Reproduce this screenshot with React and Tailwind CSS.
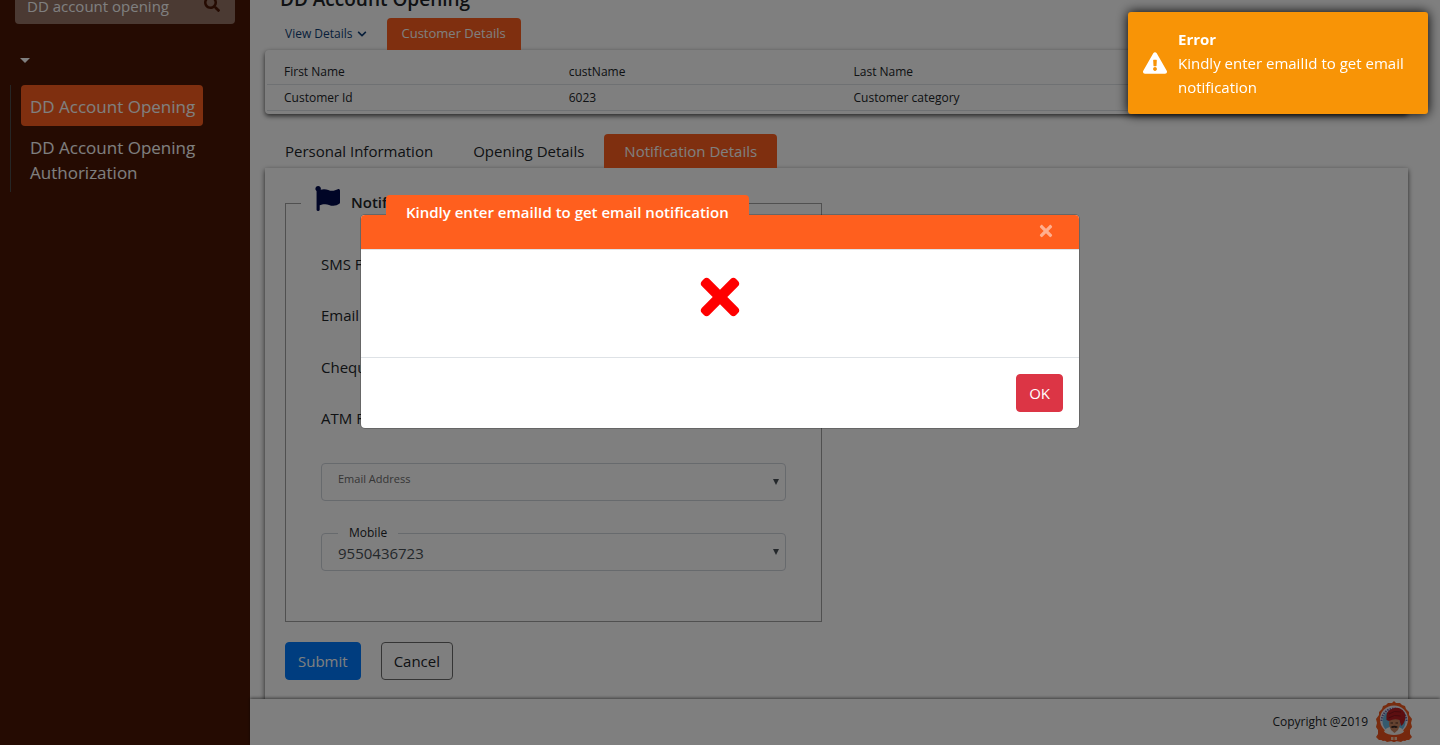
import React from "react";
import { FaChevronDown, FaExclamationTriangle, FaFlag, FaSearch, FaTimes } from "react-icons/fa";

function Sidebar() {
  return (
    <aside className="w-[250px] shrink-0 overflow-hidden bg-[#4b1705] text-white">
      <div className="-mt-4 px-[15px]">
        <div className="flex h-10 items-center rounded bg-[#967466] px-3">
          <input
            type="text"
            aria-label="Search menu"
            defaultValue="DD account opening"
            className="min-w-0 flex-1 bg-transparent pt-1 text-[15px] text-white outline-none"
          />
          <button type="button" aria-label="Search" className="mr-[3px] text-[#4b1705]">
            <FaSearch size={16} />
          </button>
        </div>
      </div>
      <button type="button" aria-label="Toggle menu" className="mt-[34px] ml-5 block">
        <svg width="10" height="5" viewBox="0 0 10 5" className="block fill-white">
          <path d="M0 0h10L5 5z" />
        </svg>
      </button>
      <nav className="mt-[22px] mr-[47px] ml-[10px] border-l border-[#4d4d4a] pl-[10px] text-[17px] leading-[25px]">
        <a href="#opening" className="block rounded bg-[#ff5f1e] pt-[9px] pb-[7px] pl-[9px]">
          DD Account Opening
        </a>
        <a href="#authorization" className="block pt-[9px] pb-[7px] pl-[9px]">
          DD Account Opening Authorization
        </a>
      </nav>
    </aside>
  );
}

function CustomerTable() {
  return (
    <div className="rounded border-2 border-white/40 bg-white pt-[7px] pb-px shadow-[0_2px_5px_rgba(0,0,0,0.7)]">
      <table className="w-full table-fixed border-collapse text-[12px] leading-[19px]">
        <tbody>
          <tr className="border-b border-[#dee2e6]">
            <td className="py-[3px] pl-[17px]">First Name</td>
            <td className="py-[3px] pl-[17px]">custName</td>
            <td className="py-[3px] pl-[17px]">Last Name</td>
            <td className="py-[3px] pl-[17px]"></td>
          </tr>
          <tr className="border-b border-[#dee2e6]">
            <td className="py-[3px] pl-[17px]">Customer Id</td>
            <td className="py-[3px] pl-[17px]">6023</td>
            <td className="py-[3px] pl-[17px]">Customer category</td>
            <td className="py-[3px] pl-[17px]"></td>
          </tr>
        </tbody>
      </table>
    </div>
  );
}

function SelectArrow() {
  return (
    <svg
      width="6"
      height="6"
      viewBox="0 0 6 6"
      className="pointer-events-none absolute top-4 right-[7px] fill-[#495057]"
    >
      <path d="M0 0h6L3 6z" />
    </svg>
  );
}

function NotificationForm() {
  return (
    <form className="px-5 pt-[17px]">
      <fieldset className="w-[537px] max-w-full border border-[#a0a0a0] px-[35px] pb-[50px]">
        <legend className="-ml-5 flex h-9 items-center px-[14px]">
          <FaFlag size={25} className="-mt-[10px] mr-[11px] text-[#000a4d]" />
          <span className="-mt-[2px] text-[15px] font-semibold">Notification Details</span>
        </legend>
        <ul className="pt-[18px] text-[15px] leading-6">
          <li className="h-[51px]">
            <div className="pt-[13px]">SMS Facility</div>
          </li>
          <li className="h-[52px]">
            <div className="pt-[13px]">Email Facility</div>
          </li>
          <li className="h-[51px]">
            <div className="pt-[13px]">Cheque Facility</div>
          </li>
          <li className="h-[51px]">
            <div className="pt-[13px]">ATM Facility</div>
          </li>
        </ul>
        <div className="relative mt-[19px]">
          <select
            id="email"
            className="block h-[38px] w-full appearance-none rounded border border-[#ced4da] bg-white px-4"
          ></select>
          <label htmlFor="email" className="absolute top-[7px] left-[17px] text-[11px] leading-[18px] text-[#6c6c6c]">
            Email Address
          </label>
          <SelectArrow />
        </div>
        <div className="relative mt-8">
          <select
            id="mobile"
            className="block h-[38px] w-full appearance-none rounded border border-[#ced4da] bg-white px-4 pt-[2px] text-[15px] text-[#495057]"
          >
            <option>9550436723</option>
          </select>
          <label htmlFor="mobile" className="absolute -top-[9px] left-[17px] bg-white px-[11px] text-[12px] leading-[18px]">
            Mobile
          </label>
          <SelectArrow />
        </div>
      </fieldset>
      <div className="mt-5 flex gap-5">
        <button type="button" className="h-[38px] rounded border border-[#007bff] bg-[#007bff] px-3 text-white">
          Submit
        </button>
        <button type="button" className="h-[38px] rounded border border-[#6b6b6b] px-3">
          Cancel
        </button>
      </div>
    </form>
  );
}

function Emblem() {
  return (
    <svg width="36" height="42" viewBox="0 0 36 42" aria-hidden="true">
      <path
        d="M18 0l2 2 4 0 2 2 3 1 1 3 3 3 0 3 3 4-1 4 1 4-2 3 0 4 2 3-3 3-5 0-3 2-5-1-2 1-2-1-5 1-3-2-5 0-3-3 2-3 0-4-2-3 1-4-1-4 3-4 0-3 3-3 1-3 3-1 2-2 4 0z"
        fill="#f0581e"
      />
      <circle cx="18" cy="18.500" r="14" fill="#ece6ee" />
      <path d="M5.500 20A12.500 12.500 0 0 1 30.500 20" fill="none" stroke="#6464a8" strokeWidth="2" strokeDasharray="1.500 1" />
      <circle cx="18" cy="20.500" r="11.500" fill="#69b4dc" />
      <path d="M8 31q1-4 6-5h8q5 1 6 5l-4 4H12z" fill="#f1ede8" />
      <path d="M13 17h10.500l0.500 7-2 5-3.500 3-3.500-3-2-5z" fill="#c98460" />
      <path d="M10.500 19q-1-9 5-11 6-3 11 1 4 4 2.500 10-1 4-4 6l-1.500-6q-5-2-10.500 1z" fill="#b81c20" />
      <path d="M13 13q5-4 12-2M12.500 17q6-4 12-2" fill="none" stroke="#7c141c" strokeWidth="0.800" />
      <path d="M14.500 26q4-2.500 7.500 0-2 1.500-3.800 0.500-1.700 1-3.700-0.500z" fill="#352522" />
      <path d="M14.500 21.500H17v1h-2.500zM19.500 21.500H22v1h-2.500z" fill="#4a2d25" />
      <path d="M2 29q4 0 6 2 4 3 10 3t10-3q2-2 6-2v8l-5 3-5-1-6 2-6-2-5 1-5-3z" fill="#ed511d" />
      <path d="M15 36h2.500v3H15zM18.500 36H21v3h-2.500z" fill="#f8c7a5" />
    </svg>
  );
}

function Toast() {
  return (
    <div
      role="alert"
      className="fixed top-3 right-3 z-30 flex w-[300px] items-center gap-[11px] rounded-[3px] bg-[#f89406] p-[15px] text-[15px] leading-6 text-white shadow-[0_0_12px_#000]"
    >
      <FaExclamationTriangle size={24} className="shrink-0" />
      <div>
        <div className="font-bold">Error</div>
        <div>Kindly enter emailId to get email notification</div>
      </div>
    </div>
  );
}

function Modal() {
  return (
    <div className="fixed inset-0 z-20 flex items-start justify-center bg-black/50 pt-[214px]">
      <div
        role="dialog"
        aria-labelledby="dialog-title"
        className="relative w-[720px] rounded-[5px] border border-black/20 bg-white bg-clip-padding"
      >
        <h2
          id="dialog-title"
          className="absolute -top-5 left-[25px] h-9 rounded-t bg-[#ff5f1e] px-5 pt-[5px] text-[15px] leading-6 font-semibold text-white"
        >
          Kindly enter emailId to get email notification
        </h2>
        <div className="flex h-[35px] items-start justify-end rounded-t border-b border-[#dee2e6] bg-[#ff5f1e] pt-[7px] pr-6">
          <button type="button" aria-label="Close" className="text-white/50">
            <FaTimes size={18} />
          </button>
        </div>
        <div className="flex h-[107px] justify-center pt-[19px] text-[#ff0000]">
          <FaTimes size={56} />
        </div>
        <div className="flex justify-end border-t border-[#dee2e6] p-4">
          <button type="button" className="h-[38px] rounded border border-[#dc3545] bg-[#dc3545] px-3 text-white">
            OK
          </button>
        </div>
      </div>
    </div>
  );
}

export default function App() {
  return (
    <div className="flex h-screen overflow-hidden bg-white font-['Open_Sans','Noto_Sans',sans-serif] text-[15px] font-normal text-[#212529]">
      <Sidebar />
      <div className="flex min-w-0 flex-1 flex-col">
        <main className="min-h-0 flex-1 overflow-hidden pr-8 pl-[15px]">
          <h1 className="-mt-4 pl-[15px] text-[19px] leading-[30px] font-semibold">DD Account Opening</h1>
          <div className="mt-1 flex pl-5">
            <button type="button" className="mr-5 flex h-8 items-center gap-1 text-[12px] text-[#103f76]">
              View Details
              <FaChevronDown size={10} />
            </button>
            <button type="button" className="h-8 rounded-t bg-[#ff5f1e] px-[15px] text-[13px] text-white">
              Customer Details
            </button>
          </div>
          <CustomerTable />
          <div role="tablist" className="mt-5 flex h-[34px]">
            <button type="button" role="tab" className="px-5">
              Personal Information
            </button>
            <button type="button" role="tab" className="px-5">
              Opening Details
            </button>
            <button type="button" role="tab" aria-selected="true" className="rounded-t bg-[#ff5f1e] px-5 text-white">
              Notification Details
            </button>
          </div>
          <section className="min-h-[560px] bg-white shadow-[0_2px_5px_rgba(0,0,0,0.7)]">
            <NotificationForm />
          </section>
        </main>
        <footer className="relative flex h-[46px] shrink-0 items-center justify-end gap-2 bg-white pr-7 text-[12px] shadow-[0_-1px_3px_rgba(0,0,0,0.5)]">
          <span>Copyright @2019</span>
          <Emblem />
        </footer>
      </div>
      <Modal />
      <Toast />
    </div>
  );
}
